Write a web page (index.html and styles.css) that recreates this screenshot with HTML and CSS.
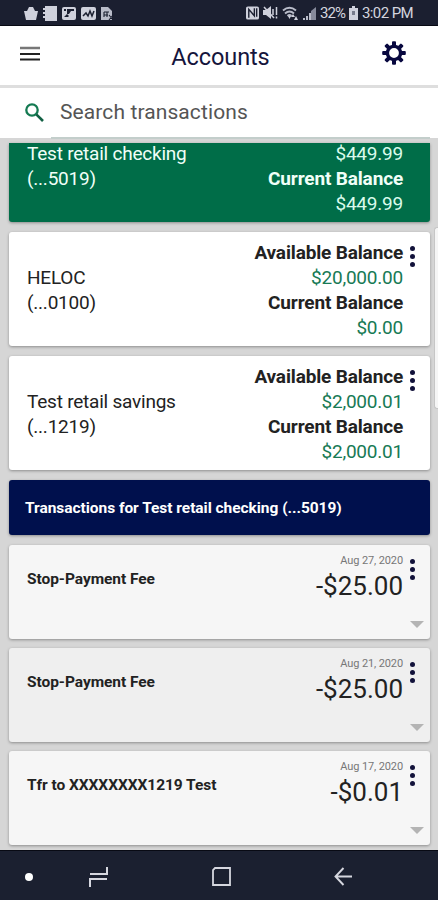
FILE: index.html
```
<!DOCTYPE html>
<html lang="en">
<head>
  <meta charset="UTF-8" />
  <meta name="viewport" content="width=device-width, initial-scale=1.0" />
  <title>Accounts</title>
  <link rel="stylesheet" href="styles.css">
</head>
<body>
  <div class="status-bar">
    <div class="notifications">
      <svg width="14" height="15" viewBox="0 0 14 15"><path d="M0 5h3l2-4h4l2 4h3l-2 9H2z" fill="#cfd1dc"/></svg>
      <svg width="14" height="15" viewBox="0 0 14 15"><path d="M2 0h12v15H2zM0 2h3v2H0zM0 6h3v2H0zM0 10h3v2H0z" fill="#cfd1dc"/></svg>
      <svg width="14" height="15" viewBox="0 0 14 15"><rect y="1" width="14" height="13" rx="2" fill="#cfd1dc"/><path d="M2 3h2v2H2zM5 3h7v2H9l-2 3H5zM2 11l3-3 2 2-1 1z" fill="#1b1f30"/></svg>
      <svg width="15" height="15" viewBox="0 0 15 15"><rect y="1" width="15" height="13" rx="2" fill="#cfd1dc"/><path d="M2 10l3-3 2 3 2-5 2 5 2-5" fill="none" stroke="#1b1f30" stroke-width="1.5"/></svg>
      <svg width="13" height="15" viewBox="0 0 13 15"><path d="M0 1h7l4 4v9H0z" fill="#b9bcc9"/><path d="M3 6h5M3 9h4M3 6v5M6 6v5M8 9l4 5M12 9l-4 5" stroke="#1b1f30" stroke-width="1.1"/></svg>
    </div>
    <div class="system">
      <svg width="13" height="14" viewBox="0 0 14 14"><rect width="14" height="14" rx="2" fill="#cfd1dc"/><path d="M3 12V3l6 7V2M11.500 2v9" fill="none" stroke="#1b1f30" stroke-width="1.500"/></svg>
      <svg width="15" height="14" viewBox="0 0 15 14"><path d="M0 4h3l5-4v13L3 9H0z" fill="#cfd1dc"/><path d="M1 1l10 11M10 3v6M13.500 1v8M13.500 10.500v2" stroke="#cfd1dc" stroke-width="1.500"/></svg>
      <svg width="17" height="14" viewBox="0 0 17 14"><path d="M1 4.500Q7.500-1 14 4.500M3 7.500q4.500-4 9 0M5.500 10q2-2 4 0" fill="none" stroke="#b9bcc9" stroke-width="1.900"/><path d="M6 10l1.500 3L9 10zM11 8l2 3H9zM12 14l2-4 2 4z" fill="#cfd1dc"/></svg>
      <svg width="13" height="13" viewBox="0 0 13 13"><path d="M0 13v-2h2v2zM3 13V9h2v4zM6 13V6h2v7z" fill="#b9bcc9"/><path d="M8 13V4l5-4v13z" fill="#868a9b"/></svg>
      <span class="battery">32%</span>
      <svg width="9" height="14" viewBox="0 0 9 14"><path d="M3 0h3v2h3v12H0V2h3z" fill="#cfd1dc"/><path d="M3 5h3v4H3z" fill="#777b8c"/></svg>
      <span class="clock">3:02 PM</span>
    </div>
  </div>

  <header>
    <svg class="menu" width="20" height="16" viewBox="0 0 20 16"><path d="M0 2h20" stroke="#777" stroke-width="2.500"/><path d="M0 8h20M0 13.500h20" stroke="#222" stroke-width="2"/></svg>
    <h1>Accounts</h1>
    <svg class="settings" width="24" height="24" viewBox="-12 -12 24 24">
      <g fill="#08083f">
        <rect id="tooth" x="-2" y="-11.800" width="4" height="5" rx="1"/>
        <use href="#tooth" transform="rotate(45)"/>
        <use href="#tooth" transform="rotate(90)"/>
        <use href="#tooth" transform="rotate(135)"/>
        <use href="#tooth" transform="rotate(180)"/>
        <use href="#tooth" transform="rotate(225)"/>
        <use href="#tooth" transform="rotate(270)"/>
        <use href="#tooth" transform="rotate(315)"/>
      </g>
      <circle r="6.600" fill="none" stroke="#08083f" stroke-width="3.400"/>
    </svg>
  </header>

  <div class="search">
    <svg width="19" height="19" viewBox="0 0 19 19"><circle cx="7" cy="7" r="5.700" fill="none" stroke="#147a52" stroke-width="2.300"/><path d="M11.300 11.300l6.700 6.700" stroke="#126044" stroke-width="2.600"/></svg>
    <span>Search transactions</span>
  </div>

  <main>
    <section class="card account selected">
      <div class="name">Test retail checking<br>(...5019)</div>
      <div class="balances">
        <span>$449.99</span>
        <strong>Current Balance</strong>
        <span>$449.99</span>
      </div>
    </section>

    <section class="card account">
      <div class="name">HELOC<br>(...0100)</div>
      <div class="balances">
        <strong>Available Balance</strong>
        <span>$20,000.00</span>
        <strong>Current Balance</strong>
        <span>$0.00</span>
      </div>
      <div class="dots"><i></i><i></i><i></i></div>
    </section>

    <section class="card account">
      <div class="name">Test retail savings<br>(...1219)</div>
      <div class="balances">
        <strong>Available Balance</strong>
        <span>$2,000.01</span>
        <strong>Current Balance</strong>
        <span>$2,000.01</span>
      </div>
      <div class="dots"><i></i><i></i><i></i></div>
    </section>

    <h2 class="card">Transactions for Test retail checking (...5019)</h2>

    <section class="card transaction">
      <div class="title">Stop-Payment Fee</div>
      <div class="details">
        <span class="date">Aug 27, 2020</span>
        <span class="amount">-$25.00</span>
      </div>
      <div class="dots"><i></i><i></i><i></i></div>
      <div class="arrow"></div>
    </section>

    <section class="card transaction alt">
      <div class="title">Stop-Payment Fee</div>
      <div class="details">
        <span class="date">Aug 21, 2020</span>
        <span class="amount">-$25.00</span>
      </div>
      <div class="dots"><i></i><i></i><i></i></div>
      <div class="arrow"></div>
    </section>

    <section class="card transaction">
      <div class="title">Tfr to XXXXXXXX1219 Test</div>
      <div class="details">
        <span class="date">Aug 17, 2020</span>
        <span class="amount">-$0.01</span>
      </div>
      <div class="dots"><i></i><i></i><i></i></div>
      <div class="arrow"></div>
    </section>
    <div class="scrollbar"></div>
  </main>

  <nav>
    <span class="dot"></span>
    <svg class="recents" width="20" height="20" viewBox="0 0 20 20"><path d="M1 7h17V0M1 20v-8h17" fill="none" stroke="#d6d7df" stroke-width="2"/></svg>
    <svg class="home" width="19" height="19" viewBox="0 0 19 19"><path d="M3 1h15v17H1V3z" fill="none" stroke="#d6d7df" stroke-width="1.800"/></svg>
    <svg class="back" width="19" height="19" viewBox="0 0 19 19"><path d="M18 9.500H1.500M9.500 1l-8 8.500 8 8.500" fill="none" stroke="#d6d7df" stroke-width="1.900"/></svg>
  </nav>
</body>
</html>
```
FILE: styles.css
```
* {
  margin: 0;
  padding: 0;
  box-sizing: border-box;
}

body {
  width: 438px;
  height: 900px;
  overflow: hidden;
  font-family: Roboto, sans-serif;
  background: #d6d6d6;
  color: #222;
}

svg {
  display: block;
  flex: none;
}

.status-bar {
  height: 26px;
  padding: 1px 25px 0 24px;
  display: flex;
  justify-content: space-between;
  align-items: center;
  background: #1b1f30;
  border-bottom: 1px solid #080a14;
  color: #d4d5df;
  font-size: 15px;
}

.notifications {
  display: flex;
  gap: 5px;
}

.system {
  display: flex;
  align-items: center;
  gap: 4px;
  white-space: nowrap;
}

.battery {
  width: 25px;
  letter-spacing: -0.9px;
}

.clock {
  width: 51px;
  letter-spacing: -0.6px;
}

header {
  height: 62px;
  padding: 0 32px 3px 20px;
  display: flex;
  justify-content: space-between;
  align-items: center;
  background: #fff;
  border-bottom: 3px solid #dedede;
}

header h1 {
  padding: 6px 0 0 19px;
  font-size: 23.5px;
  font-weight: 400;
  letter-spacing: -0.1px;
  color: #15153c;
}

.settings {
  margin-bottom: 2px;
}

.search {
  height: 50px;
  padding: 0 25px 2px;
  display: flex;
  align-items: center;
  gap: 16px;
  background: #fff;
  font-size: 21px;
  letter-spacing: 0.1px;
  color: #555;
}

main {
  position: relative;
  height: 712px;
  padding: 5px 8px 0 9px;
  display: flex;
  flex-direction: column;
  gap: 10px;
}

main::before {
  content: "";
  position: absolute;
  top: -1px;
  left: 51px;
  width: 379px;
  height: 2px;
  background: #c3cecb;
}

.card {
  position: relative;
  flex: none;
  border-radius: 3px;
  box-shadow: 0 1px 3px rgba(0, 0, 0, 0.35);
}

.account {
  height: 114px;
  padding: 8px 27px 0 18px;
  display: flex;
  justify-content: space-between;
  background: #fff;
  font-size: 19px;
  line-height: 25px;
  letter-spacing: -0.22px;
}

.account .name {
  padding-top: 25px;
}

.balances {
  display: flex;
  flex-direction: column;
  align-items: flex-end;
}

.balances strong {
  font-weight: 700;
  letter-spacing: -0.15px;
}

.balances span {
  color: #177a55;
}

.selected {
  height: 79px;
  padding-top: 0;
  background: #006d48;
  border-radius: 0 0 3px 3px;
  color: #f0fff8;
}

.selected .name,
.selected .balances {
  padding: 0;
  margin-top: -2px;
}

.selected .balances span {
  color: #d9fbec;
}

.dots {
  position: absolute;
  top: 14px;
  right: 15px;
  display: flex;
  flex-direction: column;
  gap: 3px;
}

.dots i {
  width: 5px;
  height: 5px;
  border-radius: 50%;
  background: #12123a;
}

h2.card {
  height: 55px;
  padding-left: 16px;
  background: #00104d;
  color: #fff;
  font-size: 15.5px;
  line-height: 57px;
  letter-spacing: -0.04px;
}

.transaction {
  height: 94px;
  margin-bottom: -1px;
  padding: 8px 27px 0 18px;
  display: flex;
  justify-content: space-between;
  background: #f6f6f6;
}

.transaction.alt {
  background: #efefef;
}

.title {
  padding-top: 16px;
  font-size: 15.5px;
  font-weight: 700;
  line-height: 20px;
  letter-spacing: -0.05px;
}

.details {
  display: flex;
  flex-direction: column;
  align-items: flex-end;
}

.date {
  font-size: 11px;
  line-height: 16px;
  letter-spacing: -0.12px;
  color: #777;
}

.amount {
  font-size: 26px;
  line-height: 34px;
}

.arrow {
  position: absolute;
  right: 6px;
  bottom: 11px;
  border: 7px solid transparent;
  border-top-color: #b4b4b4;
  border-bottom: 0;
}

.scrollbar {
  position: absolute;
  top: 89px;
  right: 0;
  width: 4px;
  height: 182px;
  border: 1px solid #c6c6c6;
  border-right: 0;
  border-radius: 3px 0 0 3px;
  background: #f5f5f5;
}

nav {
  height: 50px;
  padding: 2px 85px 0 25px;
  display: flex;
  justify-content: space-between;
  align-items: center;
  background: #1b2030;
  border-top: 1px solid #080a14;
}

.dot {
  width: 8px;
  height: 8px;
  border-radius: 50%;
  background: #fff;
}

.recents {
  margin-left: -47px;
}
```
